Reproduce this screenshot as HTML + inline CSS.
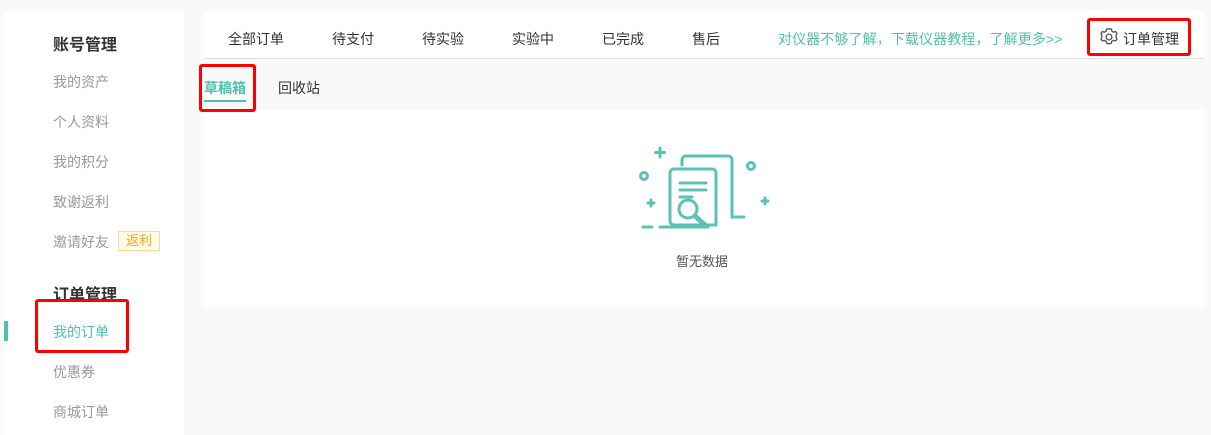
<!DOCTYPE html><html><head><meta charset="utf-8"><style>
*{margin:0;padding:0;box-sizing:border-box}
body{width:1211px;height:435px;background:#f9f9f9;font-family:"Liberation Sans","Noto Sans CJK SC",sans-serif;position:relative;overflow:hidden}
.a{position:absolute;white-space:nowrap}
.side{left:4px;top:11px;width:180px;height:424px;background:#fff}
.h{font-size:16px;font-weight:bold;color:#333}
.it{font-size:14px;color:#999}
.top{left:204px;top:11px;width:1000px;height:48px;background:#fff;border-bottom:1px solid #ddd}
.t{font-size:14px;color:#333;top:29px}
.red{border:3px solid #f00;border-radius:3px}
</style></head><body>
<div class="a side"></div>
<div class="a h" style="left:53px;top:31px">账号管理</div>
<div class="a it" style="left:53px;top:72px">我的资产</div>
<div class="a it" style="left:53px;top:112px">个人资料</div>
<div class="a it" style="left:53px;top:152px">我的积分</div>
<div class="a it" style="left:53px;top:192px">致谢返利</div>
<div class="a it" style="left:53px;top:232px">邀请好友</div>
<div class="a" style="left:118px;top:231px;width:42px;height:20px;border:1px solid #f5dd8f;background:#fffbe6;color:#f5a623;font-size:13px;text-align:center;line-height:18px">返利</div>
<div class="a h" style="left:53px;top:281px">订单管理</div>
<div class="a" style="left:4px;top:321px;width:4px;height:20px;background:#4fc0b0"></div>
<div class="a it" style="left:53px;top:322px;color:#4fc0b0">我的订单</div>
<div class="a it" style="left:53px;top:362px">优惠券</div>
<div class="a it" style="left:53px;top:402px">商城订单</div>

<div class="a top"></div>
<div class="a t" style="left:228px">全部订单</div>
<div class="a t" style="left:332px">待支付</div>
<div class="a t" style="left:422px">待实验</div>
<div class="a t" style="left:512px">实验中</div>
<div class="a t" style="left:602px">已完成</div>
<div class="a t" style="left:692px">售后</div>
<div class="a t" style="left:778px;color:#4fc0b0;letter-spacing:0.1px">对仪器不够了解，下载仪器教程，了解更多&gt;&gt;</div>
<svg class="a" style="left:1099px;top:27px" width="20" height="20" viewBox="0 0 18 18"><path d="M9 1.5l2 .4.5 1.8 1.6.9 1.8-.5 1.3 1.6-.8 1.7v1.8l.8 1.7-1.3 1.6-1.8-.5-1.6.9-.5 1.8-2 .4-2-.4-.5-1.8-1.6-.9-1.8.5-1.3-1.6.8-1.7V7.4L1.8 5.7 3.1 4.1l1.8.5 1.6-.9L7 1.9z" fill="none" stroke="#555" stroke-width="1.2"/><circle cx="9" cy="9" r="2.6" fill="none" stroke="#555" stroke-width="1.2"/></svg>
<div class="a t" style="left:1123px;font-size:14px">订单管理</div>

<div class="a" style="left:204px;top:78px;font-size:14px;font-weight:bold;color:#4fc0b0">草稿箱</div>
<div class="a" style="left:204px;top:100px;width:42px;height:2px;background:#4fc0b0"></div>
<div class="a" style="left:278px;top:78px;font-size:14px;color:#333">回收站</div>

<div class="a" style="left:204px;top:109px;width:1000px;height:199px;background:#fff"></div>
<svg class="a" style="left:620px;top:140px" width="160" height="100" viewBox="0 0 160 100" fill="none" stroke="#5bc2b4" stroke-width="3" stroke-linecap="round">
<path d="M40 8v9M35.5 12.5h9M31 60v6M28 63h6M145 58v6M142 61h6"/>
<circle cx="24" cy="36" r="3.5"/><circle cx="131" cy="26" r="3.5"/>
<path d="M62 25V20a4 4 0 0 1 4-4h42a4 4 0 0 1 4 4v57h12"/>
<path d="M50 33a4 4 0 0 1 4-4h38a4 4 0 0 1 4 4v52H54a4 4 0 0 1-4-4z" fill="#fff"/>
<path d="M60 43h26M60 50h26M60 57h12"/>
<circle cx="68" cy="69" r="9" fill="#fff"/><path d="M75 76l10 9" stroke-width="5"/>
<path d="M23 87h9M40 87h48"/>
</svg>
<div class="a" style="left:676px;top:251px;font-size:13px;color:#555">暂无数据</div>

<div class="a red" style="left:199px;top:64px;width:57px;height:48px"></div>
<div class="a red" style="left:35px;top:299px;width:94px;height:54px"></div>
<div class="a red" style="left:1087px;top:18px;width:104px;height:38px"></div>
</body></html>
